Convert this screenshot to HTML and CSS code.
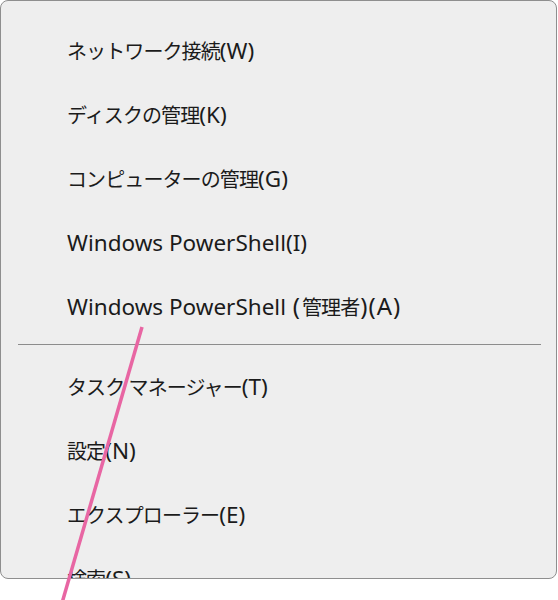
FILE: index.html
```html
<!DOCTYPE html>
<html lang="ja">
<head>
  <meta charset="UTF-8" />
  <meta name="viewport" content="width=device-width, initial-scale=1.0"/>
  <title>Win+X メニュー</title>
  <link rel="stylesheet" href="styles.css">
</head>
<body>
  <div class="menu">
    <div class="item">ネットワーク接続<span class="lat">(W)</span></div>
    <div class="item">ディスクの管理<span class="lat">(K)</span></div>
    <div class="item">コンピューターの管理<span class="lat">(G)</span></div>
    <div class="item"><span class="lat">Windows PowerShell(I)</span></div>
    <div class="item"><span class="lat">Windows PowerShell </span><span class="big">(</span>管理者<span class="big">)(A)</span></div>
    <div class="sep"></div>
    <div class="item">タスク マネージャー<span class="lat">(T)</span></div>
    <div class="item">設定<span class="lat">(N)</span></div>
    <div class="item">エクスプローラー<span class="lat">(E)</span></div>
    <div class="item">検索<span class="lat">(S)</span></div>
  </div>

  <svg class="pointer" width="558" height="600" viewBox="0 0 558 600">
    <line x1="142" y1="327" x2="62" y2="603" stroke="#e866a3" stroke-width="3.5" />
  </svg>
</body>
</html>
```

FILE: styles.css
```css
body {
  margin: 0;
  background-color: #fff;
  font-family: "Noto Sans", "Noto Sans CJK JP", sans-serif;
  color: #1b1b1b;
}
.menu {
  box-sizing: border-box;
  width: 557px;
  height: 579px;
  padding-top: 18px;
  background-color: #eeeeee;
  border: 1px solid #8e8e8e;
  border-radius: 8px;
  overflow: hidden;
}
.item {
  height: 64px;
  line-height: 64px;
  padding-left: 66px;
  font-size: 20px;
  letter-spacing: -0.9px;
  white-space: nowrap;
}
.lat {
  font-size: 22.5px;
  letter-spacing: 0;
}
.big {
  font-size: 24px;
  line-height: 0;
  letter-spacing: 1px;
  margin: 0 1px;
}
.sep {
  height: 1px;
  margin: 5px 15px 10px 17px;
  background-color: #8c8c8c;
}
.pointer {
  position: absolute;
  top: 0;
  left: 0;
  pointer-events: none;
}
```
